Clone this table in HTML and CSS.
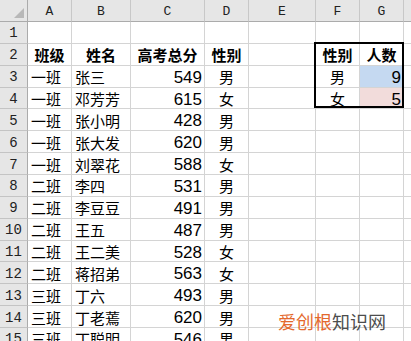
FILE: index.html
```html
<!DOCTYPE html>
<html>
<head>
<meta charset="utf-8">
<link rel="stylesheet" href="styles.css">
</head>
<body>
<div class="sheet">
  <div class="corner"></div>
  <div class="ch">A</div><div class="ch">B</div><div class="ch">C</div><div class="ch">D</div><div class="ch">E</div><div class="ch">F</div><div class="ch">G</div><div class="ch last"></div>

  <div class="rh">1</div><div class="c"></div><div class="c"></div><div class="c"></div><div class="c"></div><div class="c"></div><div class="c"></div><div class="c"></div><div class="c"></div>

  <div class="rh">2</div><div class="c m b">班级</div><div class="c m b">姓名</div><div class="c m b">高考总分</div><div class="c m b">性别</div><div class="c"></div><div class="c m b">性别</div><div class="c m b">人数</div><div class="c"></div>

  <div class="rh">3</div><div class="c l">一班</div><div class="c l">张三</div><div class="c r">549</div><div class="c m">男</div><div class="c"></div><div class="c m">男</div><div class="c r blue">9</div><div class="c"></div>

  <div class="rh">4</div><div class="c l">一班</div><div class="c l">邓芳芳</div><div class="c r">615</div><div class="c m">女</div><div class="c"></div><div class="c m">女</div><div class="c r pink">5</div><div class="c"></div>

  <div class="rh">5</div><div class="c l">一班</div><div class="c l">张小明</div><div class="c r">428</div><div class="c m">男</div><div class="c"></div><div class="c"></div><div class="c"></div><div class="c"></div>

  <div class="rh">6</div><div class="c l">一班</div><div class="c l">张大发</div><div class="c r">620</div><div class="c m">男</div><div class="c"></div><div class="c"></div><div class="c"></div><div class="c"></div>

  <div class="rh">7</div><div class="c l">一班</div><div class="c l">刘翠花</div><div class="c r">588</div><div class="c m">女</div><div class="c"></div><div class="c"></div><div class="c"></div><div class="c"></div>

  <div class="rh">8</div><div class="c l">二班</div><div class="c l">李四</div><div class="c r">531</div><div class="c m">男</div><div class="c"></div><div class="c"></div><div class="c"></div><div class="c"></div>

  <div class="rh">9</div><div class="c l">二班</div><div class="c l">李豆豆</div><div class="c r">491</div><div class="c m">男</div><div class="c"></div><div class="c"></div><div class="c"></div><div class="c"></div>

  <div class="rh">10</div><div class="c l">二班</div><div class="c l">王五</div><div class="c r">487</div><div class="c m">男</div><div class="c"></div><div class="c"></div><div class="c"></div><div class="c"></div>

  <div class="rh">11</div><div class="c l">二班</div><div class="c l">王二美</div><div class="c r">528</div><div class="c m">女</div><div class="c"></div><div class="c"></div><div class="c"></div><div class="c"></div>

  <div class="rh">12</div><div class="c l">二班</div><div class="c l">蒋招弟</div><div class="c r">563</div><div class="c m">女</div><div class="c"></div><div class="c"></div><div class="c"></div><div class="c"></div>

  <div class="rh">13</div><div class="c l">三班</div><div class="c l">丁六</div><div class="c r">493</div><div class="c m">男</div><div class="c"></div><div class="c"></div><div class="c"></div><div class="c"></div>

  <div class="rh">14</div><div class="c l">三班</div><div class="c l">丁老蔫</div><div class="c r">620</div><div class="c m">男</div><div class="c"></div><div class="c"></div><div class="c"></div><div class="c"></div>

  <div class="rh">15</div><div class="c l">三班</div><div class="c l">丁聪明</div><div class="c r">546</div><div class="c m">男</div><div class="c"></div><div class="c"></div><div class="c"></div><div class="c"></div>
</div>
<div class="box"></div>
<div class="mark"><span class="o">爱创根</span><span class="g">知识网</span></div>
</body>
</html>
```

FILE: styles.css
```css
html, body {
  margin: 0;
  padding: 0;
  background: #fff;
  width: 411px;
  height: 341px;
  overflow: hidden;
  position: relative;
}

.sheet {
  display: grid;
  grid-template-columns: 28px 44px 59px 74px 44px 67px 44px 44px 8px;
  grid-template-rows: 22px repeat(15, 21.86px);
  width: 411px;
  font-family: "Noto Sans CJK SC", "Liberation Sans", sans-serif;
  font-size: 15px;
  color: #000;
}

.sheet > div {
  box-sizing: border-box;
  overflow: hidden;
  white-space: nowrap;
}

.corner {
  background: #e6e6e6;
  border-right: 1px solid #ababab;
  border-bottom: 1px solid #ababab;
  position: relative;
}
.corner::after {
  content: "";
  position: absolute;
  right: 3px;
  bottom: 3px;
  width: 0;
  height: 0;
  border-left: 10px solid transparent;
  border-bottom: 10px solid #b8b8b8;
}

.ch {
  background: #e6e6e6;
  border-right: 1px solid #c8c8c8;
  border-bottom: 1px solid #ababab;
  font-family: "Liberation Mono", monospace;
  font-size: 13px;
  color: #222;
  display: flex;
  align-items: center;
  justify-content: center;
  padding-top: 1px;
}

.rh {
  background: #e6e6e6;
  border-right: 1px solid #ababab;
  border-bottom: 1px solid #c4c4c4;
  font-family: "Liberation Mono", monospace;
  font-size: 14px;
  color: #222;
  display: flex;
  align-items: center;
  justify-content: center;
  padding-top: 2px;
}

.c {
  border-right: 1px solid #d4d4d4;
  border-bottom: 1px solid #d4d4d4;
  display: flex;
  align-items: center;
  padding: 1px 2px 0 3px;
  line-height: 1;
}

.l { justify-content: flex-start; }
.m { justify-content: center; padding-left: 2px; }
.r {
  justify-content: flex-end;
  font-family: "Liberation Sans Narrow", "Liberation Sans", sans-serif;
  font-size: 17px;
  padding-top: 2px;
}
.b { font-weight: 700; }

.blue { background: #c5d9f1; }
.pink { background: #f2dcdb; }

.box {
  position: absolute;
  left: 314px;
  top: 42px;
  width: 90px;
  height: 66px;
  box-sizing: border-box;
  border: 2px solid #000;
  pointer-events: none;
}

.mark {
  position: absolute;
  left: 278px;
  top: 309px;
  font-family: "Noto Sans CJK SC", sans-serif;
  font-size: 18px;
  line-height: 24px;
  white-space: nowrap;
}
.mark .o { color: #e4692e; }
.mark .g { color: #4d4d4d; }
```
